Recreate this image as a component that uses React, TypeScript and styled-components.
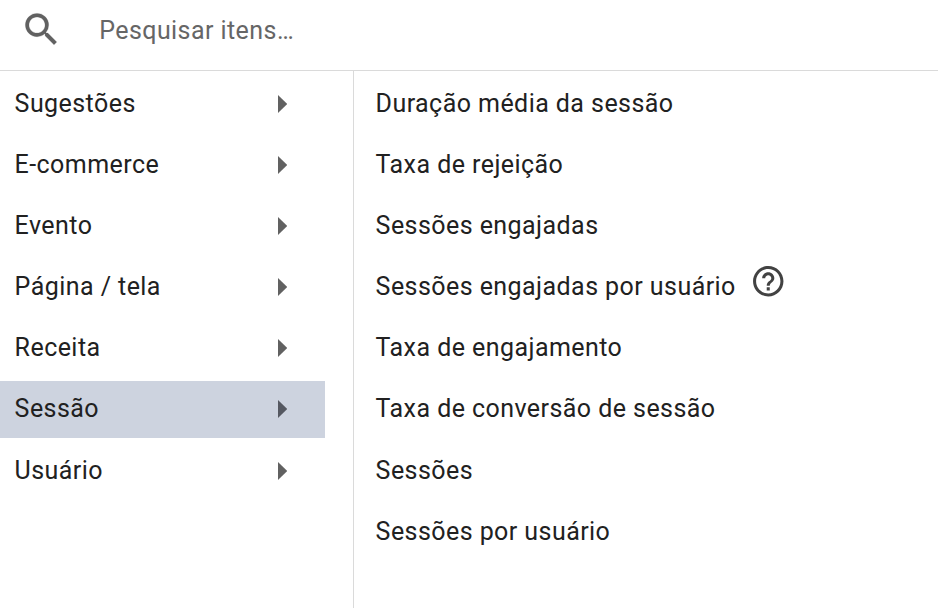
import React from "react";
import styled, { createGlobalStyle } from "styled-components";

const GlobalStyle = createGlobalStyle`
  * { box-sizing: border-box; }
  body { margin: 0; background: #fff; font-family: Roboto, sans-serif; color: #212121; }
`;

const Picker = styled.div`
  width: 938px;
  height: 608px;
  overflow: hidden;
  display: flex;
  flex-direction: column;
`;

const SearchBar = styled.label`
  height: 71px;
  flex: none;
  display: flex;
  align-items: flex-start;
  border-bottom: 1px solid #dadada;
`;

const SearchIcon = styled.svg`
  width: 43px;
  height: 43px;
  margin: 8.4px 0 0 20px;
  fill: #616161;
  stroke: #616161;
  stroke-width: 0.15;
`;

const Placeholder = styled.span`
  margin: 15px 0 0 36.2px;
  font-size: 25px;
  line-height: 32px;
  letter-spacing: 0.43px;
  color: #666;
`;

const Columns = styled.div`
  flex: 1;
  display: grid;
  grid-template-columns: 354px 1fr;
  min-height: 0;
`;

const Categories = styled.nav`
  border-right: 1px solid #dadada;
  padding-top: 4.5px;
`;

const Metrics = styled.div`
  padding: 4.5px 0 0 21.6px;
`;

const Row = styled.div`
  height: 61.15px;
  display: flex;
  align-items: flex-start;
`;

const Category = styled.div<{ $active?: boolean }>`
  width: 325px;
  height: 57px;
  display: flex;
  align-items: center;
  justify-content: space-between;
  padding: 0 37.6px 1px 14.6px;
  background: ${(p) => (p.$active ? "#cdd3df" : "transparent")};
`;

const Metric = styled.div`
  height: 57px;
  display: flex;
  align-items: center;
  padding-bottom: 1px;
`;

const Label = styled.span`
  margin-top: 0.4px;
  font-size: 25px;
  line-height: 32px;
  letter-spacing: 0.44px;
  white-space: nowrap;
`;

const Arrow = styled.svg<{ $active?: boolean }>`
  width: 9.4px;
  height: 18px;
  margin-top: 0.4px;
  fill: ${(p) => (p.$active ? "#555861" : "#616161")};
`;

const HelpIcon = styled.svg`
  width: 36.5px;
  height: 36.5px;
  margin: -11px 0 0 14px;
  fill: #424242;
`;

const categories = ["Sugestões", "E-commerce", "Evento", "Página / tela", "Receita", "Sessão", "Usuário"];

const metrics = [
  "Duração média da sessão",
  "Taxa de rejeição",
  "Sessões engajadas",
  "Sessões engajadas por usuário",
  "Taxa de engajamento",
  "Taxa de conversão de sessão",
  "Sessões",
  "Sessões por usuário",
];

export default function App() {
  return (
    <Picker>
      <GlobalStyle />
      <SearchBar>
        <SearchIcon viewBox="0 0 24 24">
          <path d="M15.5 14h-.79l-.28-.27A6.47 6.47 0 0 0 16 9.5 6.5 6.5 0 1 0 9.5 16c1.61 0 3.09-.59 4.23-1.57l.27.28v.79l5 4.99L20.49 19l-4.99-5zm-6 0C7.01 14 5 11.99 5 9.5S7.01 5 9.5 5 14 7.01 14 9.5 11.99 14 9.5 14z" />
        </SearchIcon>
        <Placeholder>Pesquisar itens…</Placeholder>
      </SearchBar>
      <Columns>
        <Categories>
          {categories.map((name) => (
            <Row key={name}>
              <Category $active={name === "Sessão"}>
                <Label>{name}</Label>
                <Arrow viewBox="0 0 10 18" preserveAspectRatio="none" $active={name === "Sessão"}>
                  <path d="M0 0L10 9L0 18z" />
                </Arrow>
              </Category>
            </Row>
          ))}
        </Categories>
        <Metrics>
          {metrics.map((name) => (
            <Row key={name}>
              <Metric>
                <Label>{name}</Label>
                {name === "Sessões engajadas por usuário" && (
                  <HelpIcon viewBox="0 0 24 24">
                    <path d="M11 18h2v-2h-2v2zm1-16C6.48 2 2 6.48 2 12s4.48 10 10 10 10-4.48 10-10S17.52 2 12 2zm0 18c-4.41 0-8-3.59-8-8s3.59-8 8-8 8 3.59 8 8-3.59 8-8 8zm0-14c-2.21 0-4 1.79-4 4h2c0-1.1.9-2 2-2s2 .9 2 2c0 2-3 1.75-3 5h2c0-2.25 3-2.5 3-5 0-2.21-1.79-4-4-4z" />
                  </HelpIcon>
                )}
              </Metric>
            </Row>
          ))}
        </Metrics>
      </Columns>
    </Picker>
  );
}
